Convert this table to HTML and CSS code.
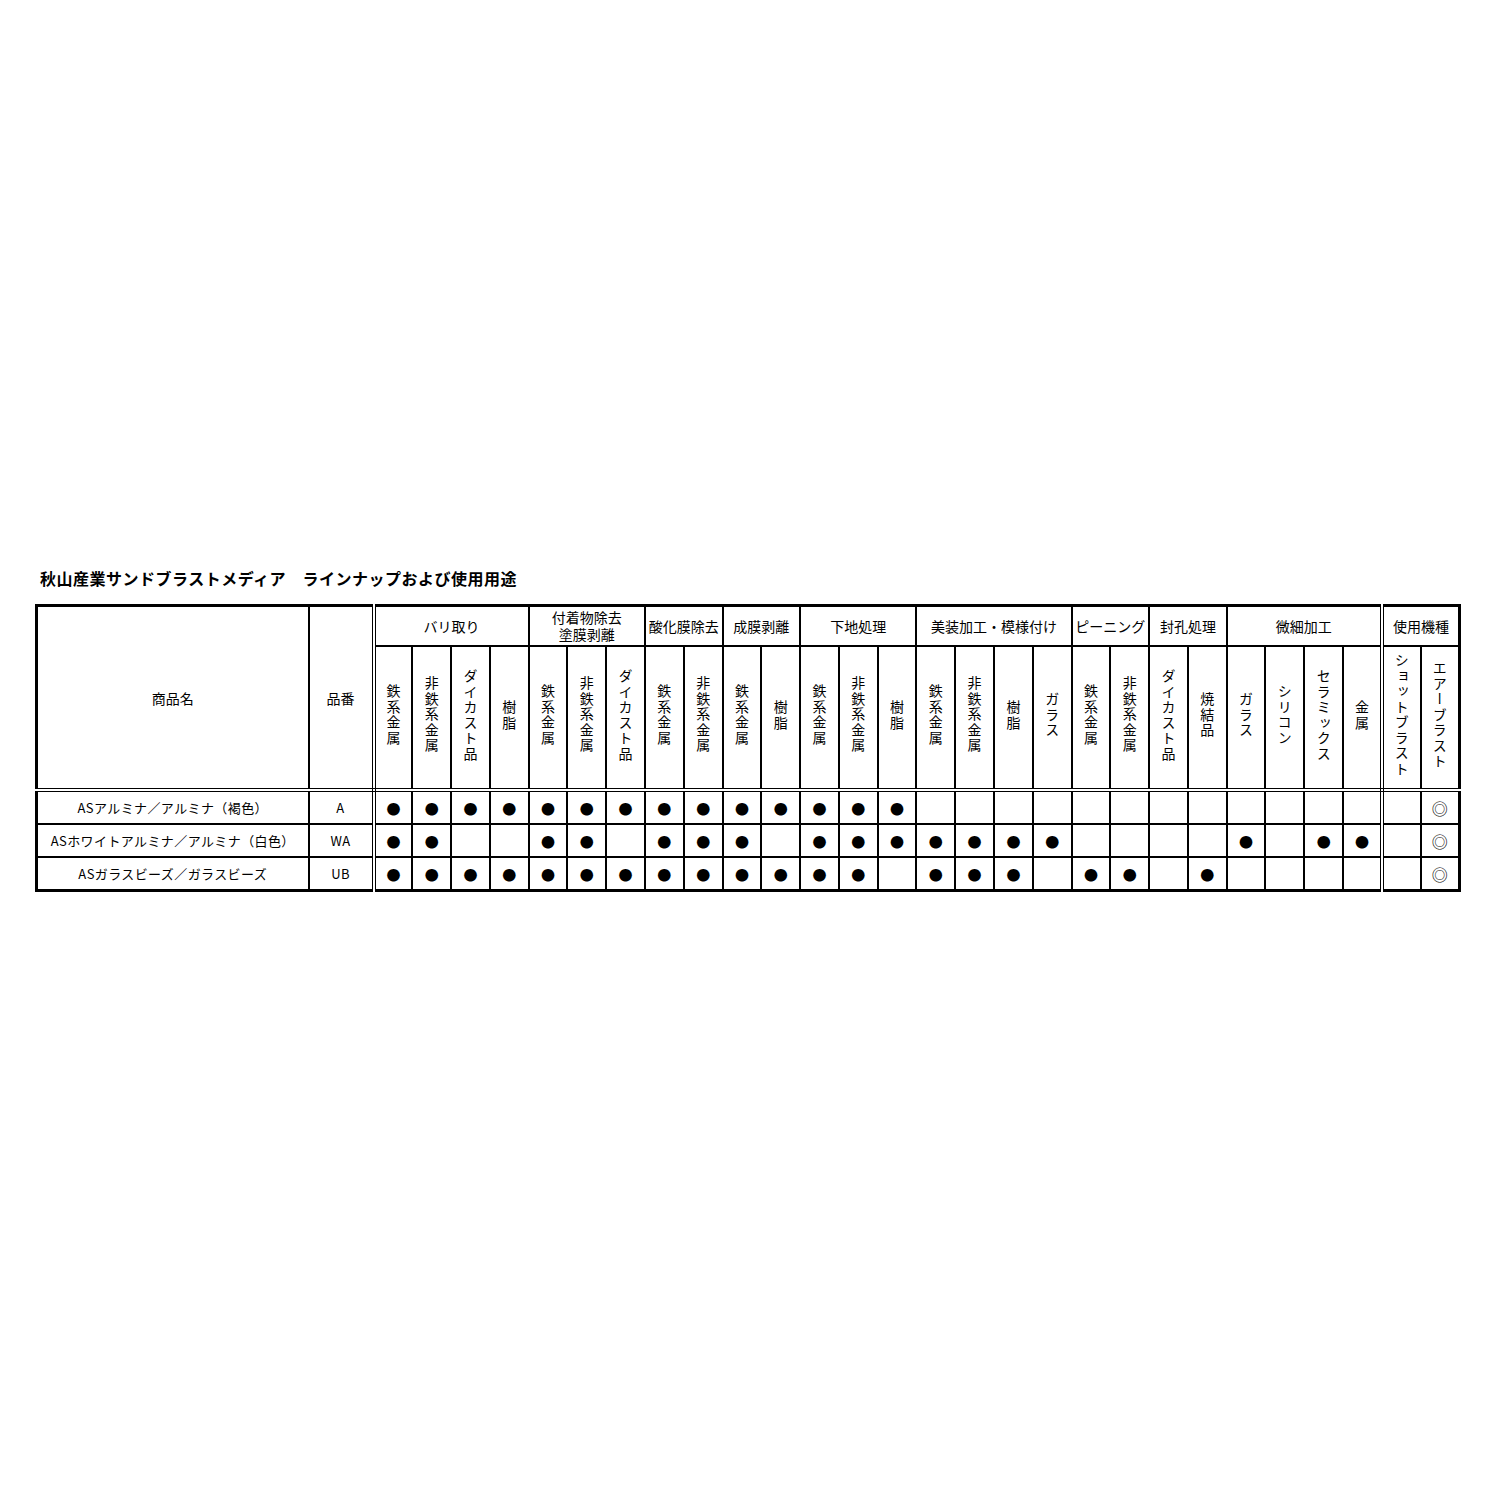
FILE: index.html
```html
<!DOCTYPE html>
<html lang="ja">
<head>
<meta charset="utf-8">
<title>秋山産業サンドブラストメディア ラインナップおよび使用用途</title>
<link rel="stylesheet" href="styles.css">
</head>
<body>
<div class="page">
  <h1 class="title">秋山産業サンドブラストメディア　ラインナップおよび使用用途</h1>
  <table class="media">
    <colgroup>
      <col class="c-name"><col class="c-code">
      <col span="28">
    </colgroup>
    <thead>
      <tr class="g">
        <th rowspan="2" class="db">商品名</th>
        <th rowspan="2" class="db dr">品番</th>
        <th colspan="4">バリ取り</th>
        <th colspan="3" class="two">付着物除去<br>塗膜剥離</th>
        <th colspan="2">酸化膜除去</th>
        <th colspan="2">成膜剥離</th>
        <th colspan="3">下地処理</th>
        <th colspan="4">美装加工・模様付け</th>
        <th colspan="2">ピーニング</th>
        <th colspan="2">封孔処理</th>
        <th colspan="4" class="dr">微細加工</th>
        <th colspan="2">使用機種</th>
      </tr>
      <tr class="sub">
        <th class="db"><span class="v">鉄系金属</span></th>
        <th class="db"><span class="v">非鉄系金属</span></th>
        <th class="db"><span class="v">ダイカスト品</span></th>
        <th class="db"><span class="v">樹脂</span></th>
        <th class="db"><span class="v">鉄系金属</span></th>
        <th class="db"><span class="v">非鉄系金属</span></th>
        <th class="db"><span class="v">ダイカスト品</span></th>
        <th class="db"><span class="v">鉄系金属</span></th>
        <th class="db"><span class="v">非鉄系金属</span></th>
        <th class="db"><span class="v">鉄系金属</span></th>
        <th class="db"><span class="v">樹脂</span></th>
        <th class="db"><span class="v">鉄系金属</span></th>
        <th class="db"><span class="v">非鉄系金属</span></th>
        <th class="db"><span class="v">樹脂</span></th>
        <th class="db"><span class="v">鉄系金属</span></th>
        <th class="db"><span class="v">非鉄系金属</span></th>
        <th class="db"><span class="v">樹脂</span></th>
        <th class="db"><span class="v">ガラス</span></th>
        <th class="db"><span class="v">鉄系金属</span></th>
        <th class="db"><span class="v">非鉄系金属</span></th>
        <th class="db"><span class="v">ダイカスト品</span></th>
        <th class="db"><span class="v">焼結品</span></th>
        <th class="db"><span class="v">ガラス</span></th>
        <th class="db"><span class="v">シリコン</span></th>
        <th class="db"><span class="v">セラミックス</span></th>
        <th class="db dr"><span class="v">金属</span></th>
        <th class="db"><span class="v">ショットブラスト</span></th>
        <th class="db"><span class="v">エアーブラスト</span></th>
      </tr>
    </thead>
    <tbody>
      <tr>
        <td>ASアルミナ／アルミナ（褐色）</td>
        <td class="dr">A</td>
        <td class="d">●</td><td class="d">●</td><td class="d">●</td><td class="d">●</td>
        <td class="d">●</td><td class="d">●</td><td class="d">●</td>
        <td class="d">●</td><td class="d">●</td>
        <td class="d">●</td><td class="d">●</td>
        <td class="d">●</td><td class="d">●</td><td class="d">●</td>
        <td></td><td></td><td></td><td></td>
        <td></td><td></td>
        <td></td><td></td>
        <td></td><td></td><td></td><td class="dr"></td>
        <td></td><td class="d2">◎</td>
      </tr>
      <tr>
        <td>ASホワイトアルミナ／アルミナ（白色）</td>
        <td class="dr">WA</td>
        <td class="d">●</td><td class="d">●</td><td></td><td></td>
        <td class="d">●</td><td class="d">●</td><td></td>
        <td class="d">●</td><td class="d">●</td>
        <td class="d">●</td><td></td>
        <td class="d">●</td><td class="d">●</td><td class="d">●</td>
        <td class="d">●</td><td class="d">●</td><td class="d">●</td><td class="d">●</td>
        <td></td><td></td>
        <td></td><td></td>
        <td class="d">●</td><td></td><td class="d">●</td><td class="d dr">●</td>
        <td></td><td class="d2">◎</td>
      </tr>
      <tr>
        <td>ASガラスビーズ／ガラスビーズ</td>
        <td class="dr">UB</td>
        <td class="d">●</td><td class="d">●</td><td class="d">●</td><td class="d">●</td>
        <td class="d">●</td><td class="d">●</td><td class="d">●</td>
        <td class="d">●</td><td class="d">●</td>
        <td class="d">●</td><td class="d">●</td>
        <td class="d">●</td><td class="d">●</td><td></td>
        <td class="d">●</td><td class="d">●</td><td class="d">●</td><td></td>
        <td class="d">●</td><td class="d">●</td>
        <td></td><td class="d">●</td>
        <td></td><td></td><td></td><td class="dr"></td>
        <td></td><td class="d2">◎</td>
      </tr>
    </tbody>
  </table>
</div>
</body>
</html>
```

FILE: styles.css
```css
html, body {
  margin: 0;
  padding: 0;
  background: #fff;
}

body {
  font-family: "Noto Sans CJK JP", "Noto Sans", sans-serif;
  color: #000;
}

.page {
  padding: 567px 0 0 35px;
}

.title {
  margin: 0 0 15px 5px;
  font-size: 16px;
  line-height: 22px;
  font-weight: 700;
  letter-spacing: 0.5px;
}

.media {
  border-collapse: collapse;
  table-layout: fixed;
  width: 1426px;
  border: 3px solid #000;
}

.c-name {
  width: 272px;
}

.c-code {
  width: 65px;
}

.media th,
.media td {
  border: 2px solid #000;
  padding: 0;
  text-align: center;
  vertical-align: middle;
  font-weight: 400;
}

.g th {
  height: 38px;
  font-size: 14px;
  line-height: 16px;
}

.g th.two {
  line-height: 17px;
}

.sub th {
  height: 141px;
}

.v {
  display: inline-block;
  writing-mode: vertical-rl;
  text-orientation: upright;
  font-size: 14px;
  line-height: 16px;
  letter-spacing: 1.5px;
}

.media tbody td {
  height: 31px;
  font-size: 13px;
  line-height: 16px;
  letter-spacing: 0.4px;
}

.media tbody td.d {
  font-size: 14px;
  line-height: 14px;
  letter-spacing: 0;
}

.media tbody td.d2 {
  font-size: 16px;
  line-height: 16px;
  letter-spacing: 0;
}

.media .dr {
  border-right: 4px double #000;
}

.media .db {
  border-bottom: 4px double #000;
}
```
